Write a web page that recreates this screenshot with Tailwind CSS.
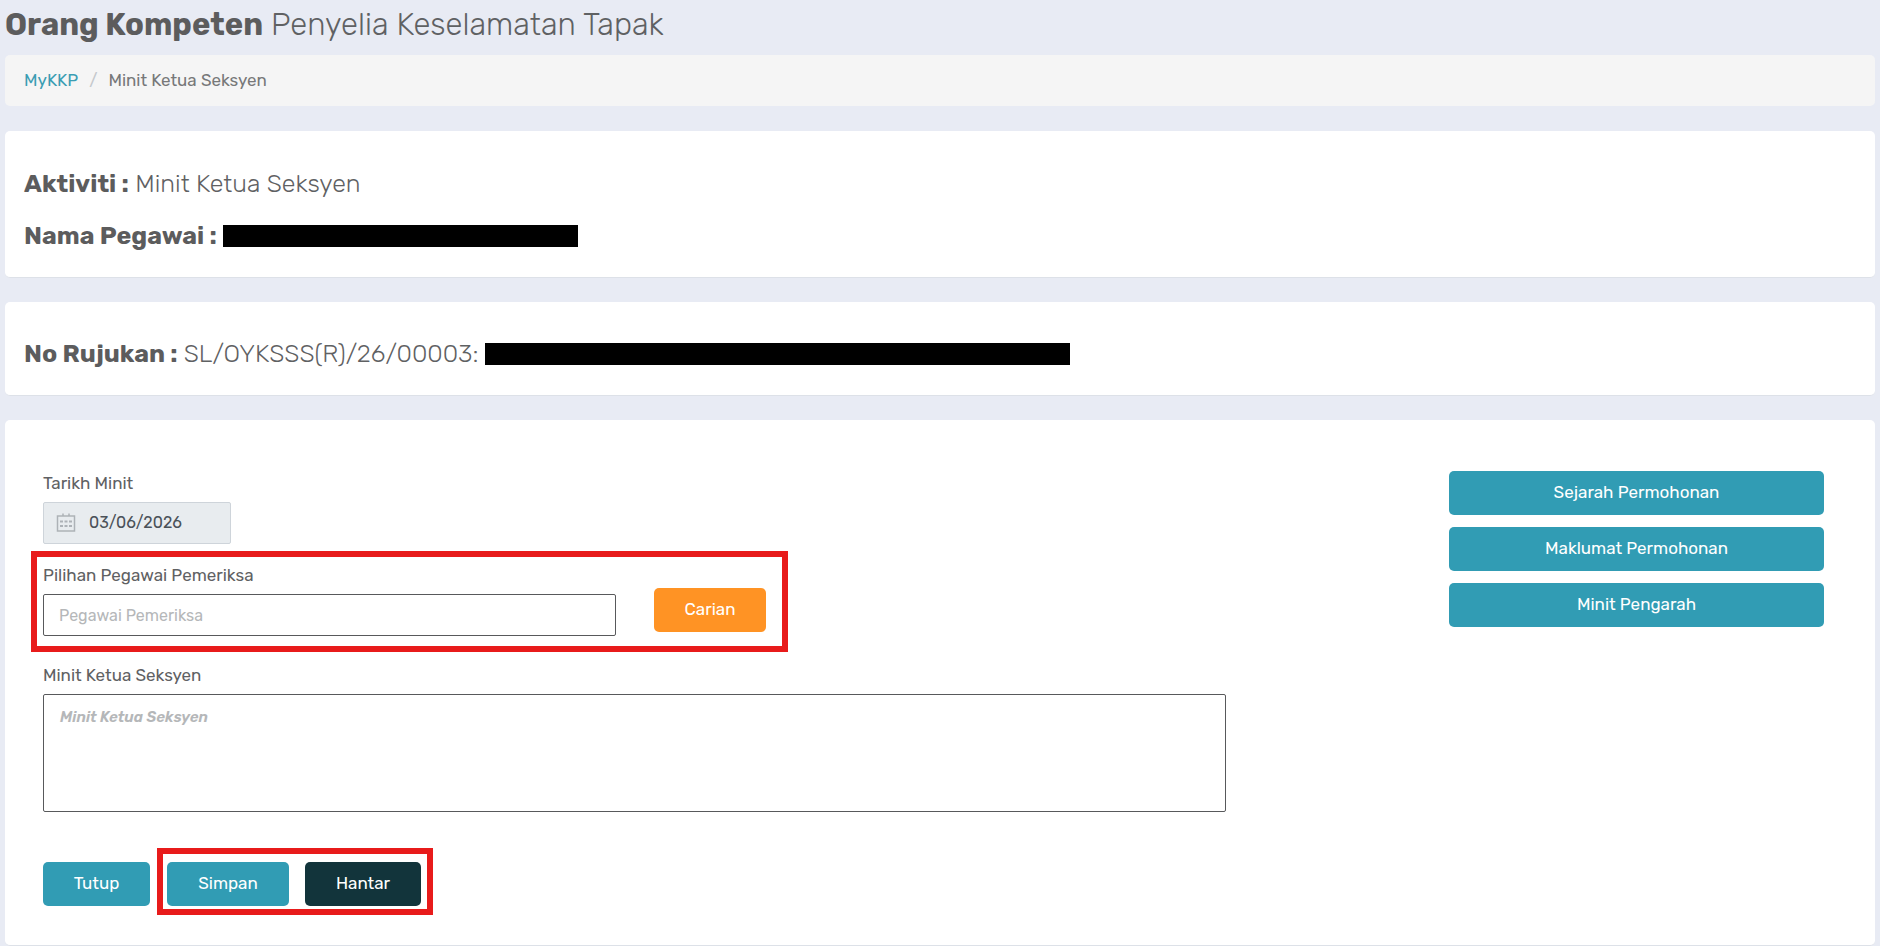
<!DOCTYPE html>
<html lang="ms">
<head>
    <meta charset="UTF-8">
    <meta name="viewport" content="width=device-width, initial-scale=1.0">
    <title>Minit Ketua Seksyen - MyKKP</title>
    <script src="https://cdn.jsdelivr.net/npm/@tailwindcss/browser@4"></script>
</head>

<body class="min-h-screen bg-[#e8ebf4] font-[Rubik,Roboto,sans-serif] text-base text-[#5f6163]">
    <!-- Page title -->
    <header class="px-[5px] pt-1">
        <h1 class="text-[31px] leading-[42px] font-light"><strong class="font-bold text-[#5c5c5d]">Orang Kompeten</strong> Penyelia Keselamatan Tapak</h1>
        <nav aria-label="Breadcrumb" class="mt-[9px] h-[51px] flex items-center gap-[11px] px-[19px] bg-[#f5f5f5] rounded-[5px] text-[17px]">
            <a href="#" class="text-[#3b9db3]">MyKKP</a>
            <span class="text-[#c4c8cc]">/</span>
            <span class="text-[#777879]">Minit Ketua Seksyen</span>
        </nav>
    </header>

    <main class="px-[5px] pt-[25px] space-y-6">
        <!-- Activity and officer -->
        <section class="bg-white rounded-[5px] border-b border-[#dde1e8] px-[19px] pt-9 pb-6 text-[25px] leading-[34px] font-light space-y-[18px]">
            <p><strong class="font-bold text-[#5c5c5d]">Aktiviti :</strong> Minit Ketua Seksyen</p>
            <p class="flex items-center gap-[6px]">
                <strong class="font-bold text-[#5c5c5d]">Nama Pegawai :</strong>
                <span class="w-[355px] h-[22px] bg-black"></span>
            </p>
        </section>

        <!-- Reference number -->
        <section class="bg-white rounded-[5px] border-b border-[#dde1e8] px-[19px] pt-[35px] pb-6 text-[25px] leading-[34px] font-light">
            <p class="flex items-center gap-[6px]">
                <strong class="font-bold text-[#5c5c5d]">No Rujukan :</strong>
                <span>SL/OYKSSS(R)/26/00003:</span>
                <span class="w-[585px] h-[22px] bg-black"></span>
            </p>
        </section>

        <!-- Minute form -->
        <section class="bg-white rounded-[5px] border-b border-[#dde1e8] pl-[38px] pr-[51px] pt-[51px] pb-[39px] flex items-start gap-[223px]">
            <form class="flex-1">
                <label for="tarikh" class="block text-[17px] leading-6">Tarikh Minit</label>
                <div class="mt-[7px] w-[188px] h-[42px] flex items-center gap-[13px] px-3 bg-[#e8ecef] border border-[#ced4da] rounded-xs">
                    <svg class="w-5 h-5 shrink-0" viewBox="0 0 20 20" fill="none" stroke="#adb2b7" stroke-width="1.5">
                        <path d="M1.500 3h17v15h-17zM7 .5v3M13 .5v3" />
                        <path d="M4 8.500h3M8.500 8.500h3M13 8.500h3M4 13h3M8.500 13h3M13 13h3" stroke-width="2" />
                    </svg>
                    <input id="tarikh" type="text" value="03/06/2026" readonly class="w-full text-base text-[#4b5259] outline-none">
                </div>

                <div class="relative mt-[19px] flex gap-[38px] items-end">
                    <div class="w-[573px]">
                        <label for="pegawai" class="block text-[17px] leading-6">Pilihan Pegawai Pemeriksa</label>
                        <input id="pegawai" type="text" placeholder="Pegawai Pemeriksa" class="mt-[7px] w-full h-[42px] px-[15px] text-base border border-[#58595b] rounded-xs placeholder:text-[#b5b7b9] outline-none">
                    </div>
                    <button type="button" class="mb-1 w-28 h-11 rounded-[5px] bg-[#ff9324] text-white text-[17px]">Carian</button>
                    <div class="absolute -left-3 -top-3 w-[757px] h-[101px] border-6 border-[#e81b1b] pointer-events-none"></div>
                </div>

                <label for="minit" class="mt-[27px] block text-[17px] leading-6">Minit Ketua Seksyen</label>
                <textarea id="minit" placeholder="Minit Ketua Seksyen" class="mt-[7px] block w-full h-[118px] px-4 py-[11px] text-[15px] border border-[#58595b] rounded-xs resize-none outline-none placeholder:text-[#b5b7b9] placeholder:italic placeholder:font-semibold"></textarea>

                <div class="mt-[50px] flex gap-[17px] text-[17px] text-white">
                    <button type="button" class="w-[107px] h-11 rounded-[5px] bg-[#319cb4]">Tutup</button>
                    <div class="relative flex gap-4">
                        <button type="button" class="w-[122px] h-11 rounded-[5px] bg-[#319cb4]">Simpan</button>
                        <button type="submit" class="w-[116px] h-11 rounded-[5px] bg-[#12343b]">Hantar</button>
                        <div class="absolute -left-2.5 -top-3.5 w-[276px] h-[67px] border-6 border-[#e81b1b] pointer-events-none"></div>
                    </div>
                </div>
            </form>

            <!-- Side actions -->
            <div class="w-[375px] flex flex-col gap-3 text-[17px] text-white">
                <button type="button" class="h-11 rounded-[5px] bg-[#319cb4]">Sejarah Permohonan</button>
                <button type="button" class="h-11 rounded-[5px] bg-[#319cb4]">Maklumat Permohonan</button>
                <button type="button" class="h-11 rounded-[5px] bg-[#319cb4]">Minit Pengarah</button>
            </div>
        </section>
    </main>
</body>
</html>
